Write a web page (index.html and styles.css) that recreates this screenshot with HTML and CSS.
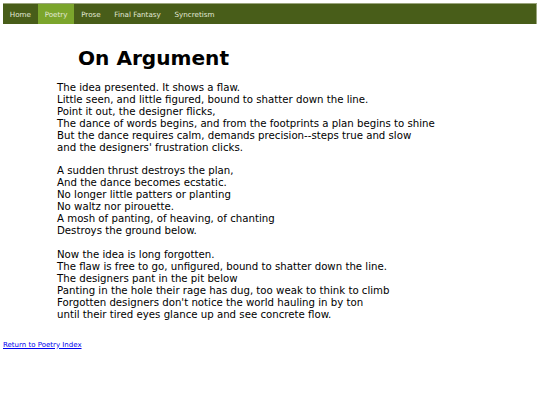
FILE: index.html
```html
<!DOCTYPE html>
<html>
<head>
<meta charset="utf-8">
<link rel="stylesheet" href="styles.css">
</head>
<body>
<div class="nav">
  <a class="item" href="#">Home</a>
  <a class="item active" href="#">Poetry</a>
  <a class="item" href="#">Prose</a>
  <a class="item" href="#">Final Fantasy</a>
  <a class="item" href="#">Syncretism</a>
</div>
<div class="content">
  <h1 class="title">On Argument</h1>
  <p class="stanza">The idea presented. It shows a flaw.<br>
Little seen, and little figured, bound to shatter down the line.<br>
Point it out, the designer flicks,<br>
The dance of words begins, and from the footprints a plan begins to shine<br>
But the dance requires calm, demands precision--steps true and slow<br>
and the designers' frustration clicks.</p>
  <p class="stanza">A sudden thrust destroys the plan,<br>
And the dance becomes ecstatic.<br>
No longer little patters or planting<br>
No waltz nor pirouette.<br>
A mosh of panting, of heaving, of chanting<br>
Destroys the ground below.</p>
  <p class="stanza">Now the idea is long forgotten.<br>
The flaw is free to go, unfigured, bound to shatter down the line.<br>
The designers pant in the pit below<br>
Panting in the hole their rage has dug, too weak to think to climb<br>
Forgotten designers don't notice the world hauling in by ton<br>
until their tired eyes glance up and see concrete flow.</p>
</div>
<a class="back" href="#">Return to Poetry Index</a>
</body>
</html>
```
FILE: styles.css
```css
html, body {
  background: #ffffff;
}
body {
  margin: 3px;
  font-family: "DejaVu Sans", Verdana, sans-serif;
  color: #000;
}
.nav {
  display: flex;
  align-items: stretch;
  background: #485d19;
  border-top: 1px solid #9aa57c;
  border-right: 1px solid #9aa57c;
  height: 20px;
}
.item {
  display: flex;
  align-items: center;
  padding: 0 6.8px;
  font-size: 7.2px;
  color: #e3e9d6;
  text-decoration: none;
}
.active {
  background: #7ba52c;
}
.content {
  padding-left: 54px;
  padding-top: 6px;
}
.title {
  font-size: 20.1px;
  font-weight: bold;
  line-height: 24px;
  margin: 16px 0 1px 21px;
}
.stanza {
  font-size: 10.2px;
  line-height: 12px;
  margin: 11.6px 0 11.6px 0;
}
.stanza:last-child {
  margin-bottom: 11px;
}
.back {
  display: inline-block;
  margin-top: 9px;
  font-size: 7px;
  color: #0000ee;
}
```
